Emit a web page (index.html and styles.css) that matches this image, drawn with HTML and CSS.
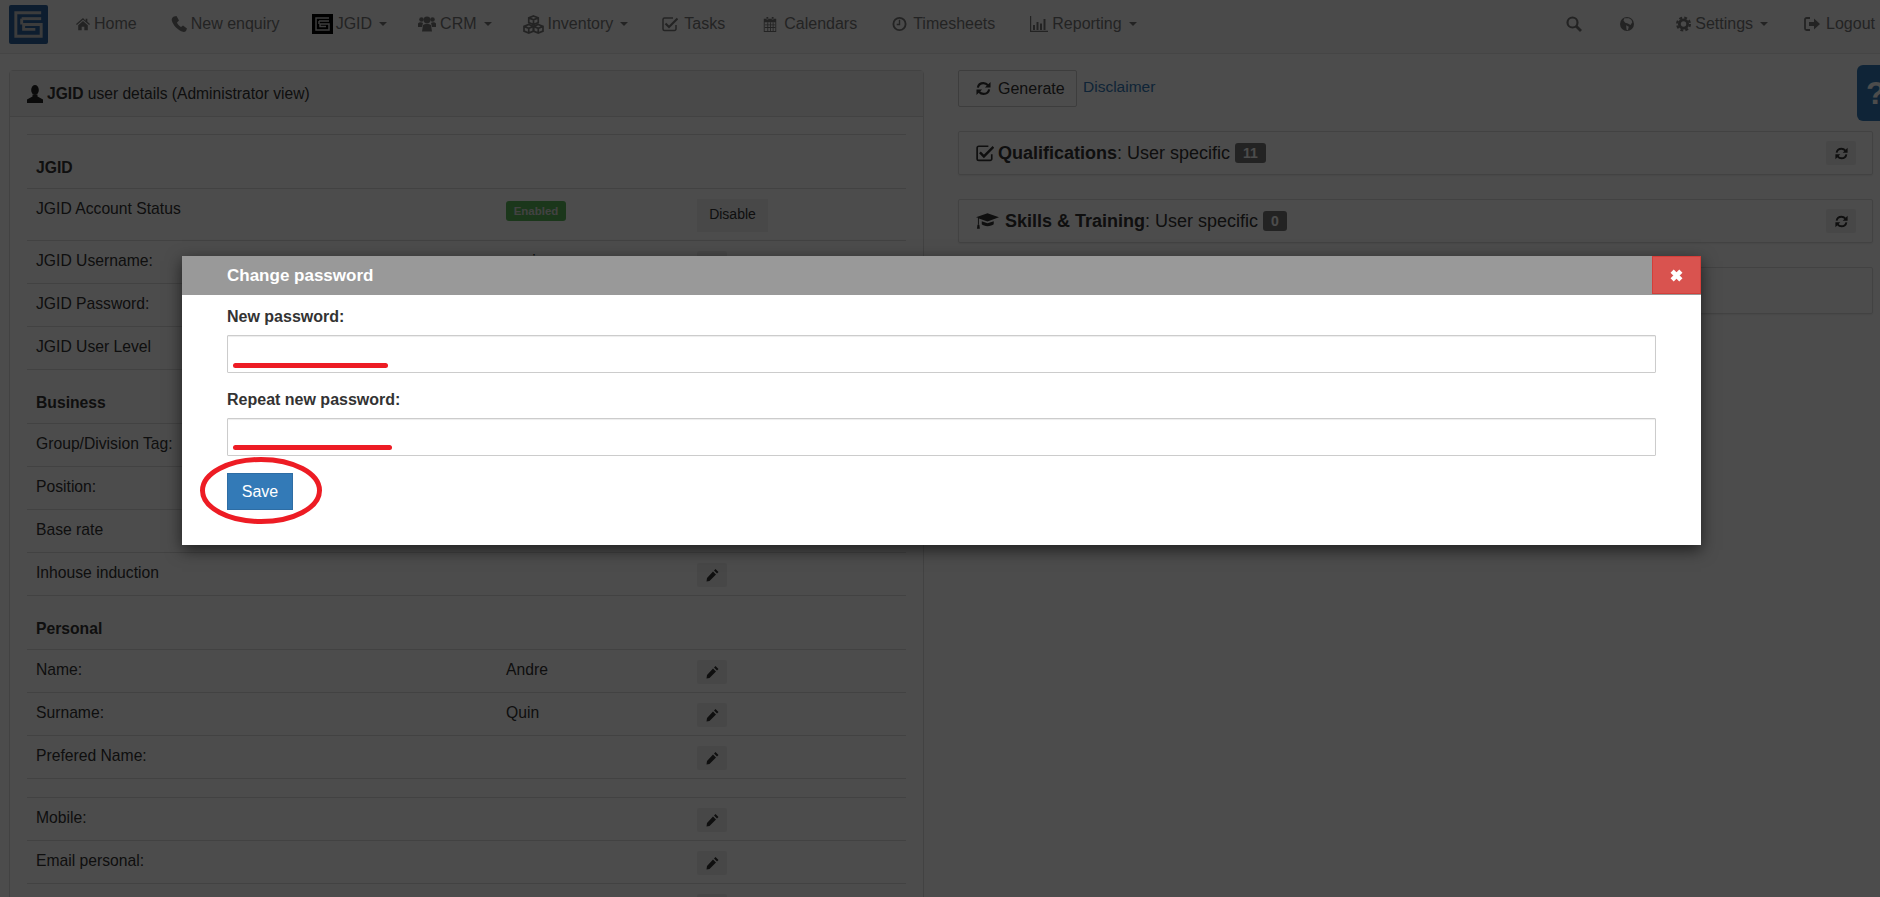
FILE: index.html
```html
<!DOCTYPE html>
<html lang="en">
<head>
<meta charset="utf-8">
<title>JGID user details</title>
<link rel="stylesheet" href="styles.css">
</head>
<body>
<svg class="sprite" aria-hidden="true">
  <symbol id="i-home" viewBox="0 0 16 14"><path d="M8 0 0 7l1 1 7-6 7 6 1-1-3-2.600V1h-2v2.200zM2.500 8.300V14H6.500V10H9.500V14H13.500V8.300L8 3.500z"/></symbol>
  <symbol id="i-phone" viewBox="0 0 16 16"><path d="M3 .5 5.500 0 8 4.500 6 6.500C6.800 8.500 8 9.800 10 11L12 9.500 16 12.500 15 15C14 16 12.500 16.200 11 15.500 6 13.500 2 9 .8 4.500.4 2.800 1.500 1.200 3 .5z"/></symbol>
  <symbol id="i-users" viewBox="0 0 18 16"><circle cx="3.500" cy="3.500" r="2.300"/><circle cx="14.500" cy="3.500" r="2.300"/><circle cx="9" cy="4" r="3.400"/><path d="M0 7.500C1 6 4 6 5 7L4 11H0zM18 7.500C17 6 14 6 13 7L14 11H18zM5 9C6 7.500 12 7.500 13 9L14 15.500H4z"/></symbol>
  <symbol id="i-cubes" viewBox="0 0 22 20"><g fill="none" stroke="currentColor" stroke-width="1.800"><path d="M11 1 16 3V8L11 10 6 8V3zM6 3 11 5 16 3M11 5V10"/><path d="M6 10 11 12V17L6 19 1 17V12zM1 12 6 14 11 12M6 14V19"/><path d="M16 10 21 12V17L16 19 11 17V12zM11 12 16 14 21 12M16 14V19"/></g></symbol>
  <symbol id="i-check" viewBox="0 0 16 16"><path d="M14 9V13A1.500 1.500 0 0 1 12.500 14.500H2.500A1.500 1.500 0 0 1 1 13V3.500A1.500 1.500 0 0 1 2.500 2H11" fill="none" stroke="currentColor" stroke-width="1.500"/><path d="M3.500 7.500 7 11 15.500 2.500" fill="none" stroke="currentColor" stroke-width="2.200"/></symbol>
  <symbol id="i-cal" viewBox="0 0 16 18"><path d="M1 3H15V18H1zM2 7V17H14V7zM4 1H6V4H4zM10 1H12V4H10z" fill-rule="evenodd"/><path d="M5 7H6V17H5zM8 7H9V17H8zM11 7H12V17H11zM2 9.500H14V10.500H2zM2 12.500H14V13.500H2z"/></symbol>
  <symbol id="i-clock" viewBox="0 0 16 16"><circle cx="8" cy="8" r="6.500" fill="none" stroke="currentColor" stroke-width="2"/><path d="M8 3.500V8.500H5" fill="none" stroke="currentColor" stroke-width="1.500"/></symbol>
  <symbol id="i-chart" viewBox="0 0 18 16"><path d="M0 0H1.200V14.800H18V16H0zM3 9H5V14H3zM6.500 6H8.500V14H6.500zM10 7.500H12V14H10zM13.500 3H15.500V14H13.500z"/></symbol>
  <symbol id="i-search" viewBox="0 0 16 16"><circle cx="6.500" cy="6.500" r="5" fill="none" stroke="currentColor" stroke-width="2.200"/><path d="M10 10 15 15" stroke="currentColor" stroke-width="2.800"/></symbol>
  <symbol id="i-globe" viewBox="0 0 16 16"><path fill-rule="evenodd" d="M8 0A8 8 0 1 0 8 16 8 8 0 0 0 8 0zM5 1.500 10 1.500 13 3 14 6 12 9 9 7.500 6 6.500 4 4zM7 9.500 10 11 9 15 7.500 14.500z"/></symbol>
  <symbol id="i-cog" viewBox="0 0 16 16"><circle cx="8" cy="8" r="4.400" fill="none" stroke="currentColor" stroke-width="3"/><circle cx="8" cy="8" r="6.800" fill="none" stroke="currentColor" stroke-width="2.400" stroke-dasharray="3.050 2.290"/></symbol>
  <symbol id="i-out" viewBox="0 0 16 14"><path d="M6 1H2.500A1.500 1.500 0 0 0 1 2.500V11.500A1.500 1.500 0 0 0 2.500 13H6" fill="none" stroke="currentColor" stroke-width="1.800"/><path d="M5 5H10V1.500L16 7 10 12.500V9H5z"/></symbol>
  <symbol id="i-user" viewBox="0 0 16 18"><ellipse cx="8" cy="5" rx="3.800" ry="5"/><path d="M5.500 9.500 5.500 11.500 0 14.500V18H16V14.500L10.500 11.500 10.500 9.500z"/></symbol>
  <symbol id="i-sync" viewBox="0 0 16 16"><g fill="none" stroke="currentColor" stroke-width="2.300"><path d="M2 7C2.500 4 5 2.200 8 2.200 10 2.200 11.500 3 12.800 4.500"/><path d="M14 9C13.500 12 11 13.800 8 13.800 6 13.800 4.500 13 3.200 11.500"/></g><path d="M15.500 1V7H9.500zM.5 15V9H6.500z"/></symbol>
  <symbol id="i-cap" viewBox="0 0 24 16"><path d="M12 0 24 4 12 8.500 3 5.300V12H2V4.500L0 4zM6 8.200 12 10.400 18.500 8.200V11.500C16 14 8 14 6 11.500z"/><path d="M1.500 12H3.500L4 16H1z"/></symbol>
  <symbol id="i-pen" viewBox="0 0 13 13"><path d="M9.500 0 12.500 3 11 4.500 8 1.500zM7 2.500 10 5.500 3.500 12 .5 12.500 1 9z"/></symbol>
  <symbol id="i-times" viewBox="0 0 12 12"><path d="M2.500 2.500 9.500 9.500M9.500 2.500 2.500 9.500" stroke="currentColor" stroke-width="3.600"/></symbol>
  <symbol id="i-maze" viewBox="0 0 40 40"><path d="M33 8H7V32H33V20H15V25H27" fill="none" stroke="currentColor" stroke-width="3"/><path d="M13 14H33" fill="none" stroke="currentColor" stroke-width="3"/><path d="M13 14V20" fill="none" stroke="currentColor" stroke-width="3"/></symbol>
</svg>

<header class="navbar">
  <a class="brand"><svg class="maze"><use href="#i-maze"/></svg></a>
  <nav class="nav">
    <a class="nav-link pr18"><svg class="ic w14"><use href="#i-home"/></svg>Home</a>
    <a class="nav-link pr16"><svg class="ic w16"><use href="#i-phone"/></svg>New enquiry</a>
    <a class="nav-link pr15"><span class="logo-mini"><svg class="maze-mini"><use href="#i-maze"/></svg></span>JGID<i class="caret"></i></a>
    <a class="nav-link pr15"><svg class="ic w18"><use href="#i-users"/></svg>CRM<i class="caret"></i></a>
    <a class="nav-link pr16"><svg class="ic w21"><use href="#i-cubes"/></svg>Inventory<i class="caret"></i></a>
    <a class="nav-link wide pr19"><svg class="ic w16 gap6"><use href="#i-check"/></svg>Tasks</a>
    <a class="nav-link wide"><svg class="ic w16 gap6"><use href="#i-cal"/></svg>Calendars</a>
    <a class="nav-link wide pr19"><svg class="ic w15 gap6"><use href="#i-clock"/></svg>Timesheets</a>
    <a class="nav-link"><svg class="ic w18"><use href="#i-chart"/></svg>Reporting<i class="caret"></i></a>
  </nav>
  <nav class="nav nav-right">
    <a class="nav-link pr14"><svg class="ic w16 solo"><use href="#i-search"/></svg></a>
    <a class="nav-link pr22"><svg class="ic w14 solo"><use href="#i-globe"/></svg></a>
    <a class="nav-link"><svg class="ic w15"><use href="#i-cog"/></svg>Settings<i class="caret"></i></a>
    <a class="nav-link last"><svg class="ic w16 gap6"><use href="#i-out"/></svg>Logout</a>
  </nav>
</header>

<main class="main">
  <section class="panel-left">
    <div class="panel-head"><svg class="ic-user"><use href="#i-user"/></svg><span><b>JGID</b> user details (Administrator view)</span></div>
    <div class="panel-body">
      <div class="table">
        <div class="row head"><b>JGID</b></div>
        <div class="row"><span>JGID Account Status</span><span><em class="label-ok">Enabled</em></span><span><a class="btn-disable">Disable</a></span></div>
        <div class="row"><span>JGID Username:</span><span>aquin</span><span><a class="btn-edit"><svg class="pen"><use href="#i-pen"/></svg></a></span></div>
        <div class="row"><span>JGID Password:</span><span></span><span><a class="btn-edit"><svg class="pen"><use href="#i-pen"/></svg></a></span></div>
        <div class="row"><span>JGID User Level</span><span></span><span><a class="btn-edit"><svg class="pen"><use href="#i-pen"/></svg></a></span></div>
        <div class="row head"><b>Business</b></div>
        <div class="row"><span>Group/Division Tag:</span><span></span><span><a class="btn-edit"><svg class="pen"><use href="#i-pen"/></svg></a></span></div>
        <div class="row"><span>Position:</span><span></span><span><a class="btn-edit"><svg class="pen"><use href="#i-pen"/></svg></a></span></div>
        <div class="row"><span>Base rate</span><span></span><span><a class="btn-edit"><svg class="pen"><use href="#i-pen"/></svg></a></span></div>
        <div class="row"><span>Inhouse induction</span><span></span><span><a class="btn-edit"><svg class="pen"><use href="#i-pen"/></svg></a></span></div>
        <div class="row head"><b>Personal</b></div>
        <div class="row"><span>Name:</span><span>Andre</span><span><a class="btn-edit"><svg class="pen"><use href="#i-pen"/></svg></a></span></div>
        <div class="row"><span>Surname:</span><span>Quin</span><span><a class="btn-edit"><svg class="pen"><use href="#i-pen"/></svg></a></span></div>
        <div class="row"><span>Prefered Name:</span><span></span><span><a class="btn-edit"><svg class="pen"><use href="#i-pen"/></svg></a></span></div>
        <div class="row spacer"></div>
        <div class="row"><span>Mobile:</span><span></span><span><a class="btn-edit"><svg class="pen"><use href="#i-pen"/></svg></a></span></div>
        <div class="row"><span>Email personal:</span><span></span><span><a class="btn-edit"><svg class="pen"><use href="#i-pen"/></svg></a></span></div>
        <div class="row"><span></span><span></span><span><a class="btn-edit"><svg class="pen"><use href="#i-pen"/></svg></a></span></div>
      </div>
    </div>
  </section>

  <section class="col-right">
    <div class="gen-row">
      <a class="btn-generate"><svg class="ic-sync"><use href="#i-sync"/></svg>Generate</a>
      <a class="link">Disclaimer</a>
    </div>
    <div class="card">
      <div class="card-title"><svg class="ic-card"><use href="#i-check"/></svg><span><b>Qualifications</b>: User specific</span><em class="badge">11</em></div>
      <a class="btn-refresh"><svg class="ic-mini"><use href="#i-sync"/></svg></a>
    </div>
    <div class="card">
      <div class="card-title"><svg class="ic-cap"><use href="#i-cap"/></svg><span><b>Skills &amp; Training</b>: User specific</span><em class="badge">0</em></div>
      <a class="btn-refresh"><svg class="ic-mini"><use href="#i-sync"/></svg></a>
    </div>
    <div class="card card-tall"></div>
  </section>
</main>

<a class="help-tab">?</a>
<div class="backdrop"></div>

<div class="modal">
  <div class="modal-head">
    <span class="modal-title">Change password</span>
    <a class="modal-close"><svg class="ic-times"><use href="#i-times"/></svg></a>
  </div>
  <div class="modal-body">
    <label class="field-label">New password:</label>
    <div class="field"><span class="scribble"></span></div>
    <label class="field-label second">Repeat new password:</label>
    <div class="field"><span class="scribble long"></span></div>
    <div class="save-wrap">
      <a class="btn-save">Save</a>
      <svg class="ring" viewBox="0 0 122 67"><ellipse cx="61" cy="33.500" rx="58.500" ry="31"/></svg>
    </div>
  </div>
</div>
</body>
</html>
```
FILE: styles.css
```css
* { box-sizing: border-box; }
html, body { margin: 0; height: 897px; overflow: hidden; }
body {
  background: #fff;
  color: #333;
  font: 16px/20px "Liberation Sans", Arial, sans-serif;
  position: relative;
}
svg { display: block; fill: currentColor; }
.sprite { position: absolute; width: 0; height: 0; }
em { font-style: normal; }

/* navbar */
.navbar {
  display: flex;
  align-items: center;
  height: 54px;
  background: #f8f8f8;
  border-bottom: 1px solid #e7e7e7;
  padding: 0 5px 5px 9px;
}
.brand {
  width: 39px;
  height: 39px;
  border-radius: 2px;
  background: #2d639f;
  color: #c9c9c9;
  flex: none;
}
.maze { width: 39px; height: 39px; }
.nav { display: flex; align-items: center; margin-left: 12px; }
.nav-right { margin-left: auto; }
.nav-link {
  display: flex;
  align-items: center;
  color: #777;
  padding: 0 17px 0 16px;
  white-space: nowrap;
}
.nav-link.wide { padding-left: 18px; }
.nav-link.pr14 { padding-right: 14px; }
.nav-link.pr15 { padding-right: 15px; }
.nav-link.pr16 { padding-right: 16px; }
.nav-link.pr18 { padding-right: 18px; }
.nav-link.pr19 { padding-right: 19px; }
.nav-link.pr22 { padding-right: 22px; }
.nav-link.last { padding-right: 0; padding-left: 19px; }
.ic { height: 16px; margin-right: 4px; flex: none; }
.w14 { width: 14px; }
.w15 { width: 15px; }
.w16 { width: 16px; }
.w18 { width: 18px; }
.w21 { width: 21px; height: 19px; }
.gap6 { margin-right: 6px; }
.solo { margin: 0 4px; }
.logo-mini {
  width: 21px;
  height: 20px;
  background: #000;
  color: #ccc;
  margin-right: 3px;
  flex: none;
}
.maze-mini { width: 21px; height: 20px; }
.caret {
  width: 0;
  height: 0;
  margin-left: 7px;
  border-top: 4px solid #777;
  border-left: 4px solid transparent;
  border-right: 4px solid transparent;
}

/* page columns */
.main { display: flex; gap: 34px; padding: 16px 0 0 9px; align-items: flex-start; }
.panel-left {
  width: 915px;
  border: 1px solid #ddd;
  border-radius: 4px 4px 0 0;
  background: #fff;
  flex: none;
}
.panel-head {
  display: flex;
  align-items: center;
  height: 46px;
  padding: 0 17px;
  background: #f5f5f5;
  border-bottom: 1px solid #ddd;
  font-size: 15.600px;
}
.ic-user { width: 16px; height: 18px; margin-right: 4px; color: #222; }
.panel-body { padding: 17px 17px 0; font-size: 15.700px; }
.table { border-top: 1px solid #ddd; }
.row {
  display: grid;
  grid-template-columns: 470px 191px 1fr;
  padding: 10px 9px 8px;
  border-bottom: 1px solid #ddd;
}
.row.head {
  display: flex;
  align-items: flex-end;
  height: 54px;
  padding-bottom: 10px;
}
.row.spacer { height: 19px; padding: 0; }
.btn-edit {
  display: flex;
  align-items: center;
  justify-content: center;
  width: 30px;
  height: 24px;
  background: #eee;
  border-radius: 2px;
}
.pen { width: 13px; height: 13px; color: #333; }
.btn-disable {
  display: block;
  width: 71px;
  height: 33px;
  line-height: 31px;
  font-size: 14px;
  text-align: center;
  background: #f0f0f0;
  color: #333;
}
.label-ok {
  display: block;
  width: 60px;
  height: 20px;
  margin-top: 2px;
  border-radius: 3px;
  background: #5cb85c;
  color: #ddd;
  font-size: 11.500px;
  font-weight: bold;
  line-height: 20px;
  text-align: center;
}

/* right column */
.col-right { width: 915px; flex: none; }
.gen-row { display: flex; align-items: flex-start; height: 37px; margin-bottom: 24px; }
.btn-generate {
  display: flex;
  align-items: center;
  width: 119px;
  height: 37px;
  padding-left: 17px;
  border: 1px solid #ccc;
  border-radius: 2px;
  background: #fff;
}
.ic-sync { width: 15px; height: 15px; margin-right: 7px; }
.link { color: #337ab7; font-size: 15.500px; margin-left: 6px; margin-top: 7px; }
.card {
  display: flex;
  align-items: center;
  justify-content: space-between;
  height: 44px;
  margin-bottom: 24px;
  padding: 0 16px 0 17px;
  border: 1px solid #ddd;
  border-radius: 2px;
  background: #fff;
  box-shadow: 0 1px 2px rgba(0, 0, 0, .08);
}
.card-tall { height: 47px; }
.card-title { display: flex; align-items: center; font-size: 18px; }
.ic-card { width: 18px; height: 18px; margin-right: 4px; }
.ic-cap { width: 23px; height: 16px; margin-right: 6px; }
.badge {
  display: block;
  margin-left: 5px;
  padding: 0 8px;
  height: 20px;
  border-radius: 3px;
  background: #777;
  color: #fff;
  font-size: 14px;
  font-weight: bold;
  line-height: 20px;
}
.btn-refresh {
  display: flex;
  align-items: center;
  justify-content: center;
  width: 30px;
  height: 24px;
  background: #eee;
  border-radius: 2px;
}
.ic-mini { width: 13px; height: 13px; }

/* over the page */
.help-tab {
  position: absolute;
  top: 65px;
  right: 0;
  width: 23px;
  height: 56px;
  padding-left: 9px;
  overflow: hidden;
  border-radius: 6px 0 0 6px;
  background: #337ab7;
  color: #fff;
  font-size: 32px;
  font-weight: bold;
  line-height: 56px;
}
.backdrop { position: absolute; inset: 0; background: rgba(0, 0, 0, .7); }
.modal {
  position: absolute;
  left: 182px;
  top: 256px;
  width: 1519px;
  height: 289px;
  background: #fff;
  box-shadow: 0 5px 15px rgba(0, 0, 0, .6);
}
.modal-head {
  display: flex;
  align-items: center;
  justify-content: space-between;
  height: 39px;
  padding-left: 45px;
  background: #999;
  color: #fff;
}
.modal-title { font-size: 17px; font-weight: bold; }
.modal-close {
  display: flex;
  align-items: center;
  justify-content: center;
  width: 49px;
  height: 38px;
  align-self: flex-start;
  background: #d9534f;
  border: 1px solid #d43f3a;
  color: #fff;
}
.ic-times { width: 15px; height: 15px; }
.modal-body { padding: 12px 45px 0; }
.field-label { display: block; font-weight: bold; height: 20px; color: #333; }
.field-label.second { margin-top: 17px; }
.field {
  position: relative;
  width: 1429px;
  height: 38px;
  margin-top: 8px;
  border: 1px solid #ccc;
  border-radius: 1px;
  box-shadow: inset 0 1px 1px rgba(0, 0, 0, .075);
}
.scribble {
  position: absolute;
  left: 5px;
  top: 27px;
  width: 155px;
  height: 5px;
  border-radius: 3px;
  background: #ed1c24;
}
.scribble.long { width: 159px; top: 26px; }
.save-wrap { position: relative; width: 66px; height: 37px; margin-top: 17px; }
.btn-save {
  display: block;
  width: 66px;
  height: 37px;
  line-height: 35px;
  text-align: center;
  color: #fff;
  background: #337ab7;
  border: 1px solid #2e6da4;
}
.ring {
  position: absolute;
  left: -27px;
  top: -16px;
  width: 122px;
  height: 67px;
  fill: none;
  stroke: #ed1c24;
  stroke-width: 5;
}
```
